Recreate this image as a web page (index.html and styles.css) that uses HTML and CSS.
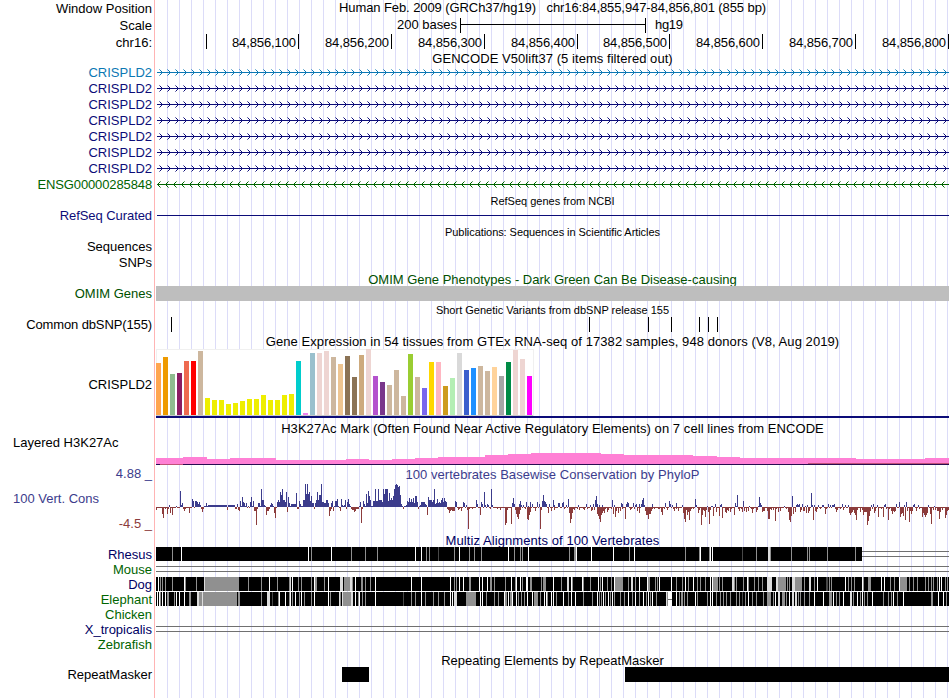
FILE: index.html
```
<!DOCTYPE html>
<html lang="en">
<head>
<meta charset="utf-8">
<title>Genome Browser chr16:84,855,947-84,856,801</title>
<link rel="stylesheet" href="styles.css">
</head>
<body>
<main class="browser">
  <section class="row first"><span class="label">Window Position</span><h2 class="title t-pos">Human Feb. 2009 (GRCh37/hg19) &nbsp; chr16:84,855,947-84,856,801 (855 bp)</h2></section>
  <section class="row scale"><span class="label">Scale</span>
    <svg class="plot" width="793" height="18"><path d="M304 2h1v15h-1zM489 2h1v15h-1zM304 8h186v1H304z"/><text class="end" x="301" y="13" textLength="60">200 bases</text><text x="499" y="13" textLength="28">hg19</text></svg></section>
  <section class="row"><span class="label">chr16:</span><svg class="plot" id="axis" width="793" height="16"></svg></section>
  <section class="row gencode"><span class="label"></span><h2 class="title t-gencode">GENCODE V50lift37 (5 items filtered out)</h2></section>
  <section class="row sky"><span class="label">CRISPLD2</span><svg class="plot gene" width="793" height="16"></svg></section>
  <section class="row navy"><span class="label">CRISPLD2</span><svg class="plot gene" width="793" height="16"></svg></section>
  <section class="row navy"><span class="label">CRISPLD2</span><svg class="plot gene" width="793" height="16"></svg></section>
  <section class="row navy"><span class="label">CRISPLD2</span><svg class="plot gene" width="793" height="16"></svg></section>
  <section class="row navy"><span class="label">CRISPLD2</span><svg class="plot gene" width="793" height="16"></svg></section>
  <section class="row navy"><span class="label">CRISPLD2</span><svg class="plot gene" width="793" height="16"></svg></section>
  <section class="row navy"><span class="label">CRISPLD2</span><svg class="plot gene" width="793" height="16"></svg></section>
  <section class="row green"><span class="label tight">ENSG00000285848</span><svg class="plot gene reverse" width="793" height="16"></svg></section>
  <section class="row small"><span class="label"></span><h2 class="title t-refseq">RefSeq genes from NCBI</h2></section>
  <section class="row short navy"><span class="label snug">RefSeq Curated</span><svg class="plot" width="793" height="15"><path d="M1 7h792v1H1z"/></svg></section>
  <section class="row short small"><span class="label"></span><h2 class="title t-pubs">Publications: Sequences in Scientific Articles</h2></section>
  <section class="row"><span class="label">Sequences</span></section>
  <section class="row"><span class="label">SNPs</span></section>
  <section class="row low forest"><span class="label"></span><h2 class="title t-omim">OMIM Gene Phenotypes - Dark Green Can Be Disease-causing</h2></section>
  <section class="row short forest"><span class="label">OMIM Genes</span><div class="omim"></div></section>
  <section class="row small"><span class="label"></span><h2 class="title t-snp">Short Genetic Variants from dbSNP release 155</h2></section>
  <section class="row short"><span class="label tight">Common dbSNP(155)</span><svg class="plot" width="793" height="15"><path d="M15 0h1v15h-1zM433 0h1v15h-1zM492 0h1v15h-1zM515 0h1v15h-1zM543 0h1v15h-1zM552 0h1v15h-1zM561 0h1v15h-1z"/></svg></section>
  <section class="row gtex-title"><span class="label"></span><h2 class="title t-gtex">Gene Expression in 54 tissues from GTEx RNA-seq of 17382 samples, 948 donors (V8, Aug 2019)</h2></section>
  <section class="row gtex"><span class="label">CRISPLD2</span><svg class="plot" id="gtex" width="793" height="69"></svg></section>
  <section class="row h3k-title"><span class="label"></span><h2 class="title t-h3k">H3K27Ac Mark (Often Found Near Active Regulatory Elements) on 7 cell lines from ENCODE</h2></section>
  <section class="row h3k"><span class="label left">Layered H3K27Ac</span>
    <svg class="plot" width="793" height="31"><path class="pink" d="M0 29V23H27V22H51V24H74V23H120V25H190V24H213V25H236V24H259V23H282V22H329V20H352V19H375V18H445V19H468V20H537V21H561V22H584V23H700V24H769V23H793V29z"/><path class="dusk" d="M0 29h793v1H0z"/><path class="blush" d="M4 29h23v1H4zM652 28h141v1H652z"/></svg></section>
  <section class="row cons">
    <div class="cons-labels"><span>4.88 _</span><span class="left">100 Vert. Cons</span><span class="min">-4.5 _</span></div>
    <div><h2 class="title t-cons">100 vertebrates Basewise Conservation by PhyloP</h2><svg class="plot" id="phylop" width="793" height="50"></svg></div></section>
  <section class="row short multiz"><span class="label"></span><h2 class="title t-multiz">Multiz Alignments of 100 Vertebrates</h2></section>
  <section class="row short midnight"><span class="label">Rhesus</span><svg class="plot align" id="rhesus" width="793" height="15"></svg></section>
  <section class="row short leaf"><span class="label">Mouse</span><svg class="plot" width="793" height="15"><path class="gap" d="M0 4h793v1H0zM0 9h793v1H0z"/></svg></section>
  <section class="row short midnight"><span class="label">Dog</span><svg class="plot align" id="dog" width="793" height="15"></svg></section>
  <section class="row short leaf"><span class="label">Elephant</span><svg class="plot align" id="elephant" width="793" height="15"></svg></section>
  <section class="row short leaf"><span class="label">Chicken</span></section>
  <section class="row short midnight"><span class="label">X_tropicalis</span><svg class="plot" width="793" height="15"><path class="gap" d="M0 4h793v1H0zM0 9h793v1H0z"/></svg></section>
  <section class="row short leaf"><span class="label">Zebrafish</span></section>
  <section class="row short rmsk-title"><span class="label"></span><h2 class="title t-rmsk">Repeating Elements by RepeatMasker</h2></section>
  <section class="row short"><span class="label">RepeatMasker</span><svg class="plot" width="793" height="15"><path d="M186 0h27v15h-27zM469 0h324v15H469z"/></svg></section>
</main>
<script src="tracks.js"></script>
</body>
</html>
```
FILE: styles.css
```
* { box-sizing: border-box; }
body { margin: 0; background: #fff; overflow: hidden; }
.browser {
  width: 949px;
  height: 698px;
  color: #000;
  font: 13px/16px "Liberation Sans", Arial, Helvetica, sans-serif;
  background:
    linear-gradient(#ffb4b4, #ffb4b4) 154px 0 / 1px 100% no-repeat,
    repeating-linear-gradient(to right, transparent 0 11px, #dcdcf8 11px 12px) 156px 0 / 793px 100% no-repeat;
}
.row {
  display: grid;
  grid-template-columns: 152px 793px;
  column-gap: 4px;
  height: 16px;
  line-height: 16px;
}
.label { height: 0; padding-top: 1px; text-align: right; white-space: nowrap; }
.short .label, .h3k .label { padding-top: 0; }
.tight { letter-spacing: -0.12px; }
.snug { letter-spacing: -0.07px; }
.left { text-align: left; padding-left: 13px; }
.title {
  margin: 0;
  font-size: 13px;
  font-weight: normal;
  line-height: inherit;
  text-align: center;
  white-space: pre;
}
.t-pos { letter-spacing: -0.085px; }
.t-gencode { letter-spacing: 0.05px; }
.t-pubs { letter-spacing: -0.06px; }
.t-gtex { letter-spacing: 0.068px; }
.t-h3k { letter-spacing: 0.06px; }
.t-cons { letter-spacing: 0.04px; line-height: 18px; height: 16px; }
.t-multiz { letter-spacing: 0.08px; }
.plot { display: block; fill: currentColor; shape-rendering: crispEdges; overflow: visible; }
.end { text-anchor: end; }
.scale { height: 18px; line-height: 18px; }
.gencode { height: 14px; line-height: 17px; }
.short { height: 15px; line-height: 15px; }
.small { line-height: 18px; }
.small .title { font-size: 11px; }
.low { line-height: 19px; }
.gtex-title { height: 17px; line-height: 19px; }
.gtex { height: 69px; line-height: 70px; }
.h3k-title { height: 17px; line-height: 21px; }
.h3k { height: 31px; line-height: 15px; }
.cons { height: 66px; color: #3c3c8c; }
.cons-labels { display: grid; grid-template-rows: 16px 34px 16px; line-height: 16px; text-align: right; }
.cons-labels .left { line-height: 33px; }
.min { color: #8c3c3c; }
.multiz { line-height: 17px; color: #000064; }
.rmsk-title { line-height: 18px; }
.sky { color: #0c78b4; }
.navy { color: #0c0c78; }
.green { color: #006400; }
.forest { color: #005000; }
.midnight { color: #000064; }
.leaf { color: #006400; }
.omim { background: #bebebe; }
.pink { fill: #ff80d5; }
.dusk { fill: #280c50; }
.blush { fill: #c05078; }
.gap { fill: #707070; }
.faint { opacity: .55; }
.panel { fill: #fff; stroke: #f0f0f0; }
.base { fill: #c8c8c8; }
.rule { fill: #0c0c78; }
.up { fill: #3c3c8c; }
.down { fill: #8c3c3c; }
.ink { fill: #000; }
.w { fill: #fff; }
.l { fill: #dcdcdc; }
.g { fill: #909090; }
.d { fill: #484848; }
```
FILE: tracks.js
```
const NS = 'http://www.w3.org/2000/svg';
function add(svg, tag, attrs, text) {
  const el = document.createElementNS(NS, tag);
  for (const k in attrs) el.setAttribute(k, attrs[k]);
  if (text) el.textContent = text;
  svg.appendChild(el);
}
const byId = id => document.getElementById(id);

// Coordinate axis
const axis = byId('axis');
[50, 142, 235, 328, 421, 513, 606, 699, 792].forEach((x, i) => {
  add(axis, 'path', {d: `M${x} 0h1v15h-1z`});
  if (i) add(axis, 'text', {x: x - 2, y: 13, class: 'end', textLength: 64}, `84,856,${i}00`);
});

// Gene introns with strand arrows
document.querySelectorAll('.gene').forEach(svg => {
  const rev = svg.classList.contains('reverse');
  let line = 'M1 8h792v1H1z', tips = '';
  for (let x = rev ? 1 : 6; x < 793; x += 8) {
    const s = rev ? 1 : -1;
    line += `M${x + s} 7h1v3h-1zM${x + 2 * s} 6h1v1h-1zM${x + 2 * s} 10h1v1h-1z`;
    tips += `M${x + 3 * s} 5h1v1h-1zM${x + 3 * s} 11h1v1h-1z`;
  }
  add(svg, 'path', {d: line});
  add(svg, 'path', {d: tips, class: 'faint'});
});

// Tissue expression: colour and distance of the bar top from the panel's top, in thirds
const gtex = byId('gtex');
const tops = [69,51,102,99,63,63,33,174,180,180,192,189,183,177,177,165,180,180,165,162,63,219,39,39,33,51,72,48,111,45,27,108,126,135,90,168,42,111,144,66,66,138,114,39,90,84,78,93,81,108,66,30,57,108];
const hues = 'ffa54f ee9a00 8fbc8f 8b1c62 ee6a50 ff0000 cdb79e eeee00 eeee00 eeee00 eeee00 eeee00 eeee00 eeee00 eeee00 eeee00 eeee00 eeee00 eeee00 eeee00 00cdcd ee82ee 9ac0cd eed5d2 eed5d2 cdb79e eec591 8b7355 8b7355 cdaa7d eed5d2 b452cd 7a378b cdb79e cdb79e cdb79e 9acd32 cdb79e 7a67ee ffd700 ffb6c1 cd9b1d b4eeb4 d9d9d9 3a5fcd 1e90ff cdb79e cdb79e ffd39b a6a6a6 008b45 eed5d2 eed5d2 ff00ff'.split(' ');
add(gtex, 'rect', {x: 0.5, y: 0.5, width: 377, height: 66, class: 'panel'});
add(gtex, 'path', {d: 'M0 66h377v1H0z', class: 'base'});
add(gtex, 'path', {d: 'M0 67h793v2H0z', class: 'rule'});
tops.forEach((t, i) => add(gtex, 'rect', {x: i * 7, y: 66 - (225 - t) / 3, width: 5, height: (225 - t) / 3, fill: '#' + hues[i]}));

// Conservation scores: [offset, positive, negative], positions in thirds of a pixel
const scores = [[-18,
 '57:2 78:1 91:16 94:2 97:4 127:8 130:6 136:6 139:6 142:5 145:3 148:5 151:2 169:4 262:3 270:6 276:10 279:5 282:4 288:4 301:5 304:10 310:6 325:4 328:4 334:18 337:7 340:7 343:2 361:2 364:4 367:3 382:5 385:7 388:5 391:15 394:12 397:18 400:7 403:7 406:5 409:15 415:10 418:4 424:3 427:3 430:3 433:3 436:3 439:14 448:6 451:3 460:7 463:7 466:23 469:13 472:23 475:13 478:15 481:6 484:11 487:4 490:4 496:4 499:7 502:15 505:7 508:12 511:12 514:23 517:5 520:5 523:4 526:4 529:7 532:7 535:4 544:4 547:6 556:6 559:6 562:8 574:8 577:2 583:2 586:7 592:5 595:8 598:3 631:5 640:6 643:3 649:13 652:4 655:16 658:11 661:7 670:6 673:6 676:18 679:6 682:6 685:18 688:7 691:7 694:7 697:5 700:18 703:13 706:18 709:18 712:18 715:6 718:14 721:7 724:9 727:7 730:11 733:18 736:22 739:23 742:22 745:20 748:21 751:12 754:3 769:2 772:6 775:5 778:9 781:5 784:8 787:5 790:9 793:4',
 '19:3 25:1 37:7 40:11 46:2 52:7 55:2 61:6 67:8 100:2 103:4 106:2 118:6 133:1 154:2 157:5 160:2 232:3 256:2 259:2 265:3 268:4 292:1 298:1 313:4 316:4 319:18 322:2 349:8 352:4 355:4 358:2 373:6 376:11 379:1 412:5 442:2 445:2 493:2 538:9 541:4 544:2 550:4 568:1 571:4 589:2 604:2 607:3 610:3 613:5 616:4 619:2 622:2 625:2 634:16 637:2 760:2'],
 [777,
 '1:11 4:11 7:5 16:2 19:5 22:5 25:5 28:5 31:3 34:2 40:10 43:7 46:7 49:7 52:5 55:7 58:18 61:3 64:4 67:8 70:4 73:5 76:4 79:7 82:9 85:5 88:9 91:6 94:5 121:6 124:5 145:5 148:4 154:2 184:7 187:3 199:5 202:3 208:15 211:2 217:3 220:2 229:18 232:2 292:4 295:9 298:3 313:3 316:6 319:2 325:2 334:5 340:1 346:5 352:3 367:5 373:3 382:6 385:12 388:6 391:5 394:3 403:3 415:7 418:2 430:4 433:4 442:4 445:5 454:2 460:8 490:2 514:3 526:2 535:3 541:7 544:11 547:3 553:2 562:2 592:7 598:2 619:4 622:3 634:3 637:5 640:4 655:4 661:2 664:3 673:3 679:3 682:7 685:9 688:2 712:3 751:4 763:6 766:3 772:2 784:4',
 '10:2 37:8 97:2 100:3 103:6 106:4 109:3 112:4 115:4 118:4 130:3 133:2 139:4 157:3 160:22 163:2 172:2 196:8 226:2 247:2 256:3 271:18 274:16 277:3 289:17 301:3 304:7 307:10 310:12 313:7 316:3 331:2 337:12 340:13 343:8 346:5 361:4 376:22 379:3 400:6 409:4 418:3 448:2 463:6 466:16 469:12 472:6 475:2 478:3 487:2 493:3 505:2 508:3 517:2 529:4 532:3 538:3 547:7 550:9 553:12 556:15 559:8 562:6 565:4 568:6 571:2 577:5 580:3 589:2 595:7 601:10 604:4 610:6 616:4 622:2 631:12 646:3 649:2 658:2 667:4 673:6 691:4 694:8 697:8 700:12 703:7 706:7 709:4 712:2 718:2 730:2 733:2 739:5 742:8 748:2 757:3 775:2 778:4 784:2 790:4'],
 [1572,
 '7:2 46:8 49:2 82:1 94:1 97:1 106:3 121:2 124:3 166:4 169:1 172:12 190:6 208:1 235:1 238:10 241:4 244:2 313:1 337:11 349:2 352:3 355:2 358:3 367:3 376:1 382:2 394:14 397:2 403:2 415:2 427:2 430:2 445:3 451:2 457:2 460:2 463:3 487:3 496:2 505:2 574:2 580:3 592:2 613:2 616:3 649:3 658:5 673:2 679:5 700:2 703:3 715:2 745:2 763:1',
 '10:6 13:12 16:15 19:3 22:8 25:5 28:13 31:4 34:2 40:2 55:6 58:3 64:18 67:8 70:3 73:4 76:10 79:3 85:5 88:17 91:3 100:9 109:5 118:9 127:11 136:5 139:6 142:3 145:4 151:5 154:2 163:8 175:2 178:4 184:2 187:5 193:4 199:5 205:4 214:2 217:6 220:2 229:5 232:3 247:5 250:4 253:4 262:4 265:12 268:12 271:2 274:3 280:3 286:14 289:2 295:5 301:4 319:2 325:5 328:13 331:15 334:9 340:7 346:5 361:5 364:3 370:4 373:4 379:6 385:6 388:4 400:13 406:4 409:5 412:2 421:2 436:7 439:2 466:2 469:5 472:3 481:2 490:3 508:6 511:8 514:6 517:5 520:3 523:6 526:8 529:13 532:3 541:5 547:3 550:8 553:5 556:5 559:5 562:18 565:14 568:9 571:4 577:2 583:6 586:4 595:10 604:2 610:10 619:2 625:13 628:2 634:4 637:7 640:4 643:5 646:4 661:10 664:7 667:6 670:9 676:13 682:4 688:15 691:4 694:7 697:4 709:4 718:2 727:10 730:6 733:8 736:10 739:8 742:6 751:7 754:17 760:3 766:3 772:4 775:4 778:12 781:5 787:3 796:11 799:8 802:4 805:3']];
const up = {}, down = {};
for (const [off, pos, neg] of scores) {
  pos.split(' ').forEach(s => { const [x, h] = s.split(':'); up[Math.floor((+x + off) / 3)] = +h; });
  neg.split(' ').forEach(s => { const [x, h] = s.split(':'); down[Math.floor((+x + off) / 3)] = +h; });
}
for (let x = 52; x < 79; x++) if (!down[x]) up[x] = up[x] || 2;
let u = '', n = '';
for (let x = 0; x < 793; x++) {
  if (up[x]) u += `M${x} ${25 - up[x]}h1v${up[x]}h-1z`;
  if (down[x]) n += `M${x} 25h1v${down[x]}h-1z`;
  if (!up[x] && !down[x]) {
    if (x < 295 && x > 40) u += `M${x} 24h1v1h-1z`;
    else n += `M${x} 25h1v1h-1z`;
  }
}
add(byId('phylop'), 'path', {d: u, class: 'up'});
add(byId('phylop'), 'path', {d: n, class: 'down'});

// Alignment blocks: position, shade and optional width, in thirds of a pixel
const marks = {
  rhesus: ['67g 94w 475w 484g 544w 604g 646g 682g 796w',
    '1w 19w 34g 43g 70d 118g 133w 163g 178g 199g 280w 298g 316g 322g 340w 463g 478g6 484w 529w 595w 643g 658w',
    '16g 58g 61w 88g 91w 97w 187d 229g 264l6 271g 334g 382g 388g 442g 526g'],
  dog: ['25w 31g 37g 46g 67g 103w 106g 139g 162l5 166g101 295g 334g 358w 382g 418g 421l 427w 445g 454g 484g 493w 496g6 523g 535w 571l9 582g21 601l6 606g 616w 634g6 646g 661g 676w 784w',
    '19w 106w 118g 124g 133w 145w 163g6 193w 202w 217w 226g6 238g 271g 289w 301g 304w 316w 322g 334w 337w 346g6 379g 385g8 415w 439g 457l6 468w 472g 502w 505g 526g 550w 556g 562w 577g 589g 598w 601g24 640g 649l6 661g 673w 700g6 721g 697w 727g 733w 769w 784g 802g',
    '16w 25g 40w 52g 61g 76g 91w 97w 100g14 118g 127g 157l6 163g 169g 190g 202w 205g 223g 235g 247g 262l6 268l8 289l6 294g24 322g 328g 337l9 347g20 373g 388l6 403g 412w 439d6 448g 454g 496w 505g 514g 523g 547w 550g 564g9 604w 613w 631g 643g 658w 661g21 688g 700g 712g 736g 745g 754g 760g 772g 778w 784w 796g 802g'],
  elephant: ['22w 28w 31g 37w 46w 52g 55g 73g 79w 88w 103w 118g6 142l6 147g9 156l3 159g102 264g6 334g 351l9 367d 385g 388w 406w 418g 421w 427g 436w 448g 454w 463g 484g 493w 535w 541g 568l3 571g 577l 580g24 603l6 616w 625g 628w 637g 646g 676w 760d 784g 796g',
    '19w 31g 55g 70g 88g 106w 112w 118l9 154g29 196w 202w 214g 238g 250g 268w 271g6 280w 286g6 292w 304w 310g 319g 328g 337w 352w 358g11 376g 388w 394w 397g 409w 414w 424g 445w 460g 469w 481w 505g 532g 547w 553g 559g 565w 571g 580w 586g 592w 598g 616g 628g 640w 652g 661w 673g 685w 694g 700w 706g 712w 724g 754l3 757g4 761w12 784w 793g 802g',
    '4g 13g 22g 46w 52g 82g 91w 97w 109g 121g 130g 139g 151g 169g 178g 187d 196g 205w 217g 229g 250g 262g11 280g 286w 295l6 306g9 318g 328w 337l5 346l5 355g 361g 373g 388g 403w 430w 448g8 460w 469g 478g 490w 511l5 520g 532w 541g 547w 553g 562g 577w 610g 625g 634g 640w 652g 670w 754g5 775w 790w 799g']
};
for (const name in marks) {
  const svg = byId(name);
  add(svg, 'rect', {x: 0, y: 0, width: name === 'rhesus' ? 706 : 793, height: 14, class: 'ink'});
  marks[name].forEach((list, i) => list.split(' ').forEach(m => {
    const [, x, shade, w] = m.match(/(\d+)(\w)(\d*)/);
    const left = Math.floor((+x + [-18, 777, 1572][i]) / 3);
    const width = Math.max(1, Math.round((w || 3) / 3));
    add(svg, 'rect', {x: left, y: 0, width, height: 14, class: shade});
  }));
}
add(byId('rhesus'), 'path', {d: 'M706 4h87v1h-87zM706 9h87v1h-87z', class: 'gap'});
add(byId('elephant'), 'path', {d: 'M512 7h4v1h-4z', class: 'gap'});
```
